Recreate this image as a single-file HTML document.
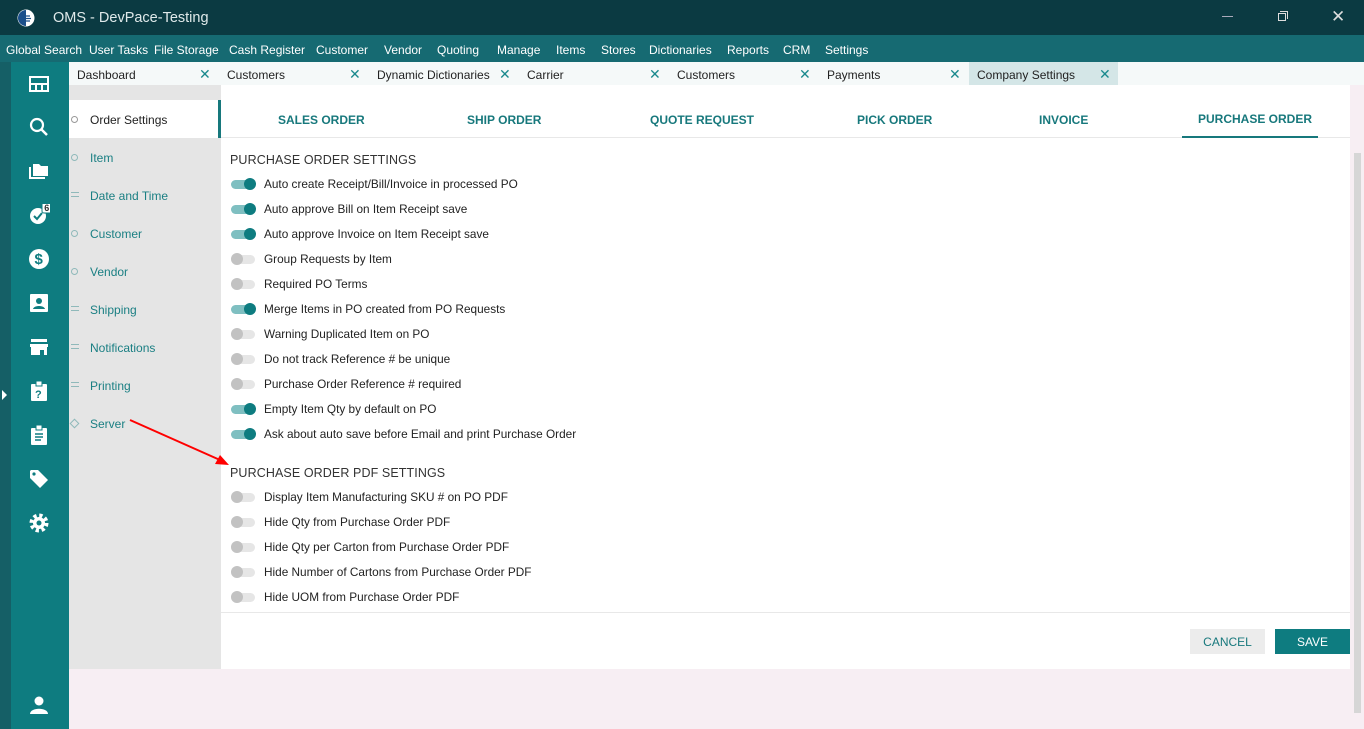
<!DOCTYPE html>
<html><head><style>
*{margin:0;padding:0;box-sizing:border-box}
body{width:1364px;height:729px;overflow:hidden;font-family:"Liberation Sans",sans-serif;font-size:12px;color:#222;background:#f7eef3;position:relative}
.a{position:absolute}
.title{left:0;top:0;width:1364px;height:35px;background:#0b3a42;color:#dfe9ea;font-size:14.5px}
.menu{left:0;top:35px;width:1364px;height:27px;background:#166a72;color:#fff;font-size:12px}
.menu span{position:absolute;top:8px}
.strip{left:0;top:62px;width:11px;height:667px;background:#155f66}
.side{left:11px;top:62px;width:58px;height:667px;background:#0e7c80}
.ic{position:absolute;left:17px;width:22px;height:22px}
.tabs{left:69px;top:62px;width:1295px;height:23px;background:#f5f9f9}
.tab{position:absolute;top:0;height:23px;width:150px;font-size:12px;padding:6px 0 0 8px;color:#222}
.tab i{position:absolute;left:130px;top:5px;font-style:normal;color:#1a8a8e;font-size:14px;line-height:14px}
.nav{left:69px;top:85px;width:152px;height:584px;background:#e5e5e5}
.ni{position:absolute;left:21px;color:#1a7f83;font-size:12px}
.bc{position:absolute;left:2px;width:7px;height:7px;border:1.2px solid #8fb9ba;border-radius:50%}
.bl{position:absolute;left:2px;width:8px;height:5px;border-top:1.3px solid #8fb9ba;border-bottom:1.3px solid #8fb9ba}
.content{left:221px;top:85px;width:1129px;height:584px;background:#fff}
.tt{position:absolute;top:27px;color:#17787c;font-weight:bold;font-size:12px}
.row{position:absolute;left:10px;height:14px}
.tr{position:absolute;left:0;top:3px;width:24px;height:9px;border-radius:5px}
.kn{position:absolute;top:1px;width:12px;height:12px;border-radius:6px}
.on .tr{background:#7fbfc1}.on .kn{left:13px;background:#0e7c80}
.off .tr{background:#e6e6e6}.off .kn{left:0;background:#c2c2c2}
.row span{position:absolute;left:33px;top:0;white-space:nowrap;font-size:11.8px}
.h{position:absolute;left:9px;font-size:12.5px;color:#333;letter-spacing:.1px}
</style></head><body>
<div class="a title">
<svg class="a" style="left:17px;top:9px" width="18" height="18"><circle cx="9" cy="9" r="8.5" fill="#fff"/><path d="M9 1a8 8 0 0 0 0 16z" fill="#1b4f8a"/><path d="M5 7h8M4 9.5h10M5 12h8" stroke="#1b4f8a" stroke-width="1.3"/></svg>
<span class="a" style="left:53px;top:10px">OMS - DevPace-Testing</span>
<div class="a" style="left:1222px;top:16px;width:11px;height:1px;background:#aab"></div>
<div class="a" style="left:1278px;top:13px;width:8px;height:8px;border:1px solid #ddd"></div><div class="a" style="left:1280px;top:11px;width:8px;height:8px;border-top:1px solid #ddd;border-right:1px solid #ddd"></div>
<span class="a" style="left:1331px;top:7px;font-size:17px;color:#ddd">✕</span>
</div>
<div class="a menu">
<span style="left:6px">Global Search</span><span style="left:89px">User Tasks</span><span style="left:154px">File Storage</span><span style="left:229px">Cash Register</span><span style="left:316px">Customer</span><span style="left:384px">Vendor</span><span style="left:437px">Quoting</span><span style="left:497px">Manage</span><span style="left:556px">Items</span><span style="left:601px">Stores</span><span style="left:649px">Dictionaries</span><span style="left:727px">Reports</span><span style="left:783px">CRM</span><span style="left:825px">Settings</span>
</div>
<div class="a strip"><div class="a" style="left:2px;top:328px;width:0;height:0;border-left:5px solid #fff;border-top:5px solid transparent;border-bottom:5px solid transparent"></div></div>
<div class="a side">
<svg class="ic" style="top:11px" viewBox="0 0 22 22"><rect x="2" y="4" width="18" height="14" fill="none" stroke="#fff" stroke-width="2"/><path d="M2 11h18M8 11v7M14 11v7" stroke="#fff" stroke-width="2"/></svg>
<svg class="ic" style="top:54px" viewBox="0 0 22 22"><circle cx="9" cy="9" r="6" fill="none" stroke="#fff" stroke-width="2.2"/><path d="M13 13l6 6" stroke="#fff" stroke-width="2.5"/></svg>
<svg class="ic" style="top:98px" viewBox="0 0 22 22"><path d="M2 7v11h15" fill="none" stroke="#fff" stroke-width="2"/><path d="M5 4h6l2 2h7v10H5z" fill="#fff"/></svg>
<svg class="ic" style="top:142px" viewBox="0 0 22 22"><circle cx="10" cy="12" r="8" fill="#fff"/><path d="M6 12l3 3 5-6" stroke="#0e7c80" stroke-width="2" fill="none"/><rect x="14" y="-2" width="10" height="11" rx="2" fill="#fff" stroke="#0e7c80"/><text x="16.3" y="7" font-size="9" font-weight="bold" fill="#333" font-family="Liberation Sans">6</text></svg>
<svg class="ic" style="top:186px" viewBox="0 0 22 22"><circle cx="11" cy="11" r="10" fill="#fff"/><text x="6.5" y="16" font-size="15" font-weight="bold" fill="#0e7c80" font-family="Liberation Sans">$</text></svg>
<svg class="ic" style="top:230px" viewBox="0 0 22 22"><rect x="2" y="2" width="18" height="18" rx="1" fill="#fff"/><circle cx="11" cy="9" r="3" fill="#0e7c80"/><path d="M5 17c1-4 11-4 12 0z" fill="#0e7c80"/></svg>
<svg class="ic" style="top:274px" viewBox="0 0 22 22"><path d="M3 3h16v3H3zM2 8h18v3H2zM3 11h16v8h-3v-5h-4v5H3z" fill="#fff"/></svg>
<svg class="ic" style="top:318px" viewBox="0 0 22 22"><rect x="3" y="4" width="16" height="17" rx="1" fill="#fff"/><rect x="8" y="1" width="6" height="5" fill="#fff" stroke="#0e7c80"/><text x="7" y="18" font-size="11" font-weight="bold" fill="#0e7c80" font-family="Liberation Sans">?</text></svg>
<svg class="ic" style="top:362px" viewBox="0 0 22 22"><rect x="3" y="4" width="16" height="17" rx="1" fill="#fff"/><rect x="8" y="1" width="6" height="5" fill="#fff" stroke="#0e7c80"/><path d="M7 10h8M7 13h8M7 16h6" stroke="#0e7c80" stroke-width="1.5"/></svg>
<svg class="ic" style="top:406px" viewBox="0 0 22 22"><path d="M2 3v7l10 10 8-8L10 2H3z" fill="#fff"/><circle cx="6" cy="6" r="1.6" fill="#0e7c80"/></svg>
<svg class="ic" style="top:450px" viewBox="0 0 22 22"><circle cx="11" cy="11" r="7" fill="none" stroke="#fff" stroke-width="5" stroke-dasharray="3 2.5"/><circle cx="11" cy="11" r="6" fill="#fff"/><circle cx="11" cy="11" r="2.5" fill="#0e7c80"/></svg>
<svg class="ic" style="top:632px" viewBox="0 0 22 22"><circle cx="11" cy="7" r="4.5" fill="#fff"/><path d="M2 20c0-7 18-7 18 0z" fill="#fff"/></svg>
</div>
<div class="a tabs">
<div class="tab" style="left:0">Dashboard<i>✕</i></div>
<div class="tab" style="left:150px">Customers<i>✕</i></div>
<div class="tab" style="left:300px">Dynamic Dictionaries<i>✕</i></div>
<div class="tab" style="left:450px">Carrier<i>✕</i></div>
<div class="tab" style="left:600px">Customers<i>✕</i></div>
<div class="tab" style="left:750px">Payments<i>✕</i></div>
<div class="tab" style="left:900px;width:149px;background:#d4e6e7">Company Settings<i>✕</i></div>
</div>
<div class="a nav">
<div class="a" style="left:0;top:15px;width:152px;height:38px;background:#fff;border-right:3px solid #17787c"></div>
<span class="bc" style="top:31px;border-color:#999"></span><span class="ni" style="top:28px;color:#222">Order Settings</span>
<span class="bc" style="top:69px"></span><span class="ni" style="top:66px">Item</span>
<span class="bl" style="top:107px"></span><span class="ni" style="top:104px">Date and Time</span>
<span class="bc" style="top:145px"></span><span class="ni" style="top:142px">Customer</span>
<span class="bc" style="top:183px"></span><span class="ni" style="top:180px">Vendor</span>
<span class="bl" style="top:221px"></span><span class="ni" style="top:218px">Shipping</span>
<span class="bl" style="top:259px"></span><span class="ni" style="top:256px">Notifications</span>
<span class="bl" style="top:297px"></span><span class="ni" style="top:294px">Printing</span>
<span class="bc" style="top:335px;border-radius:0;transform:rotate(45deg)"></span><span class="ni" style="top:332px">Server</span>
</div>
<div class="a content">
<div class="a" style="left:0;top:52px;width:1129px;height:1px;background:#e8e8e8"></div>
<span class="tt" style="left:57px;top:28px">SALES ORDER</span>
<span class="tt" style="left:246px;top:28px">SHIP ORDER</span>
<span class="tt" style="left:429px;top:28px">QUOTE REQUEST</span>
<span class="tt" style="left:636px;top:28px">PICK ORDER</span>
<span class="tt" style="left:818px;top:28px">INVOICE</span>
<span class="tt" style="left:977px;top:27px">PURCHASE ORDER</span>
<div class="a" style="left:961px;top:51px;width:136px;height:2px;background:#17787c"></div>
<div class="h" style="top:68px">PURCHASE ORDER SETTINGS</div>
<div class="row on" style="top:92px"><div class="tr"></div><div class="kn"></div><span>Auto create Receipt/Bill/Invoice in processed PO</span></div>
<div class="row on" style="top:117px"><div class="tr"></div><div class="kn"></div><span>Auto approve Bill on Item Receipt save</span></div>
<div class="row on" style="top:142px"><div class="tr"></div><div class="kn"></div><span>Auto approve Invoice on Item Receipt save</span></div>
<div class="row off" style="top:167px"><div class="tr"></div><div class="kn"></div><span>Group Requests by Item</span></div>
<div class="row off" style="top:192px"><div class="tr"></div><div class="kn"></div><span>Required PO Terms</span></div>
<div class="row on" style="top:217px"><div class="tr"></div><div class="kn"></div><span>Merge Items in PO created from PO Requests</span></div>
<div class="row off" style="top:242px"><div class="tr"></div><div class="kn"></div><span>Warning Duplicated Item on PO</span></div>
<div class="row off" style="top:267px"><div class="tr"></div><div class="kn"></div><span>Do not track Reference # be unique</span></div>
<div class="row off" style="top:292px"><div class="tr"></div><div class="kn"></div><span>Purchase Order Reference # required</span></div>
<div class="row on" style="top:317px"><div class="tr"></div><div class="kn"></div><span>Empty Item Qty by default on PO</span></div>
<div class="row on" style="top:342px"><div class="tr"></div><div class="kn"></div><span>Ask about auto save before Email and print Purchase Order</span></div>
<div class="h" style="top:381px">PURCHASE ORDER PDF SETTINGS</div>
<div class="row off" style="top:405px"><div class="tr"></div><div class="kn"></div><span>Display Item Manufacturing SKU # on PO PDF</span></div>
<div class="row off" style="top:430px"><div class="tr"></div><div class="kn"></div><span>Hide Qty from Purchase Order PDF</span></div>
<div class="row off" style="top:455px"><div class="tr"></div><div class="kn"></div><span>Hide Qty per Carton from Purchase Order PDF</span></div>
<div class="row off" style="top:480px"><div class="tr"></div><div class="kn"></div><span>Hide Number of Cartons from Purchase Order PDF</span></div>
<div class="row off" style="top:505px"><div class="tr"></div><div class="kn"></div><span>Hide UOM from Purchase Order PDF</span></div>
<div class="a" style="left:0;top:527px;width:1129px;height:1px;background:#e8e8e8"></div>
<div class="a" style="left:969px;top:544px;width:75px;height:25px;background:#ececec;color:#17787c;text-align:center;padding-top:6px;font-size:12px">CANCEL</div>
<div class="a" style="left:1054px;top:544px;width:75px;height:25px;background:#0e7c80;color:#fff;text-align:center;padding-top:6px;font-size:12px">SAVE</div>
</div>
<div class="a" style="left:1350px;top:85px;width:14px;height:644px;background:#f7eef3"><div class="a" style="left:4px;top:68px;width:7px;height:560px;background:#d6d6d6"></div></div>
<svg class="a" style="left:0;top:0" width="1364" height="729"><path d="M130 420L220 460" stroke="#f00" stroke-width="2"/><path d="M229 465L215 464L220 455z" fill="#f00"/></svg>
</body></html>
